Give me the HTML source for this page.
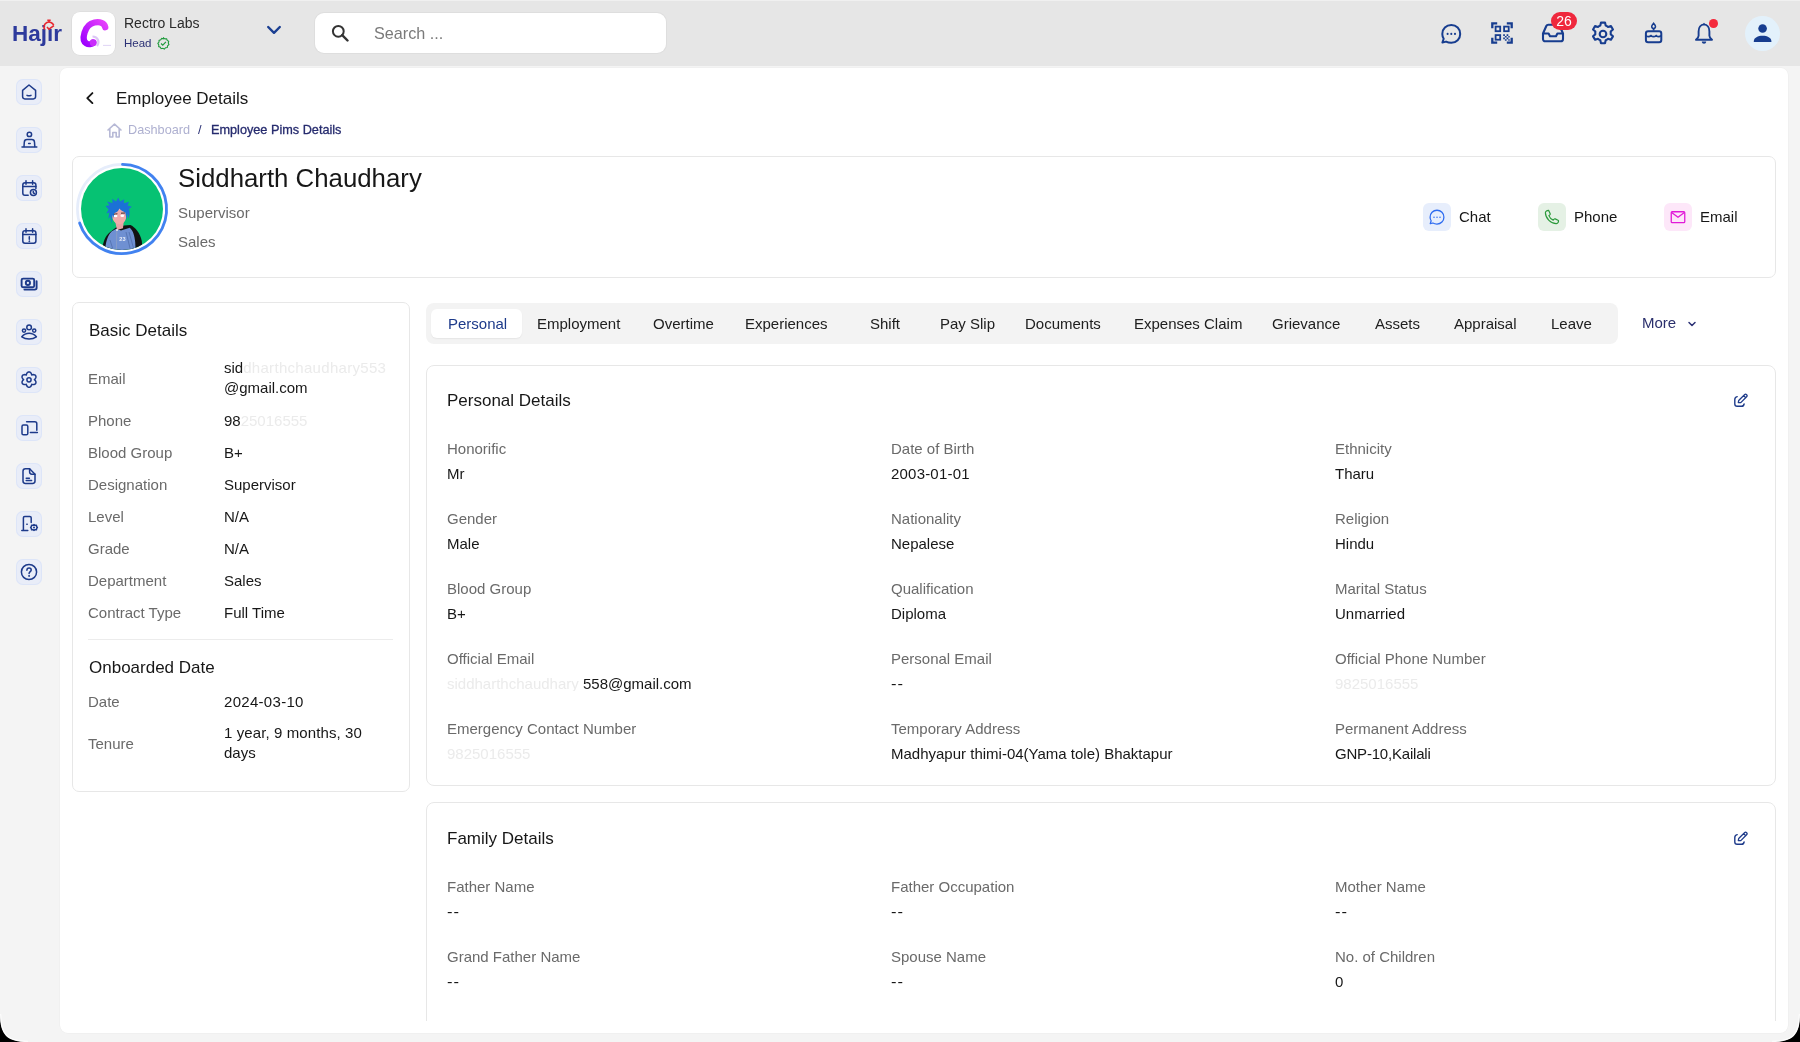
<!DOCTYPE html>
<html><head><meta charset="utf-8">
<style>
*{box-sizing:border-box;margin:0;padding:0}
html,body{width:1800px;height:1042px;overflow:hidden;background:#000;font-family:"Liberation Sans",sans-serif;color:#1f1f1f}
#win{position:absolute;left:0;top:0;width:1800px;height:1042px;background:#f4f4f4;border-radius:0;overflow:hidden}
.abs{position:absolute;white-space:nowrap;will-change:transform}
.t{position:absolute;white-space:nowrap;will-change:transform}
#hdr{position:absolute;left:0;top:1px;width:1800px;height:65px;background:#e6e6e6}
#topline{position:absolute;left:0;top:0;width:1800px;height:1px;background:#f0f0f0}
#main{position:absolute;left:60px;top:68px;width:1728px;height:965px;background:#fff;border-radius:7px 7px 8px 8px;box-shadow:0 0 0 0.5px #ececec;overflow:hidden}
#clip{position:absolute;left:0;top:0;width:1800px;height:1021px;overflow:hidden}
.ico{position:absolute}
.sb{position:absolute;left:16px;width:26px;height:26px;border-radius:7px;background:#e9edf8;box-shadow:inset 0 0 0 1px #dde5f8}
</style></head>
<body>
<div id="win">
  <div id="topline"></div>
  <div id="hdr"></div>
  <div id="main"></div>
  <!-- SIDEBAR -->
  <div class="sb" style="top:79px"></div><svg class="ico" style="left:17px;top:80px" width="24" height="24" viewBox="0 0 24 24"><path d="M5.6 10.4 L12 5 L18.6 10.4 V16.6 C18.6 18 17.7 18.9 16.3 18.9 H7.9 C6.5 18.9 5.6 18 5.6 16.6 Z" fill="none" stroke="#1d3a8a" stroke-width="1.5" stroke-linecap="round" stroke-linejoin="round"/><path d="M10 15.3 C11.3 16 12.7 16 14 15.3" fill="none" stroke="#1d3a8a" stroke-width="1.5" stroke-linecap="round" stroke-linejoin="round"/></svg>
  <div class="sb" style="top:127px"></div><svg class="ico" style="left:17px;top:128px" width="24" height="24" viewBox="0 0 24 24"><circle cx="12.4" cy="6.4" r="2.2" fill="none" stroke="#1d3a8a" stroke-width="1.5" stroke-linecap="round" stroke-linejoin="round"/><path d="M7 18.6 L7.3 14.2 C7.4 12.6 8.4 11.6 10 11.6 H14.8 C16.4 11.6 17.4 12.6 17.5 14.2 L17.8 18.6" fill="none" stroke="#1d3a8a" stroke-width="1.5" stroke-linecap="round" stroke-linejoin="round"/><path d="M5 19 H19.8" fill="none" stroke="#1d3a8a" stroke-width="1.5" stroke-linecap="round" stroke-linejoin="round"/><path d="M11.6 15.4 H13.2" fill="none" stroke="#1d3a8a" stroke-width="1.5" stroke-linecap="round" stroke-linejoin="round"/></svg>
  <div class="sb" style="top:175px"></div><svg class="ico" style="left:17px;top:176px" width="24" height="24" viewBox="0 0 24 24"><path d="M11.2 19.2 H7.9 C6.4 19.2 5.8 18.4 5.8 16.9 V9 C5.8 7.5 6.6 6.7 8.1 6.7 H16.7 C18.2 6.7 18.9 7.5 18.9 9 V12.4" fill="none" stroke="#1d3a8a" stroke-width="1.5" stroke-linecap="round" stroke-linejoin="round"/><path d="M9 4.8 V8.2 M15.6 4.8 V8.2 M5.8 10.6 H18.9" fill="none" stroke="#1d3a8a" stroke-width="1.5" stroke-linecap="round" stroke-linejoin="round"/><circle cx="16.4" cy="16.6" r="3" fill="none" stroke="#1d3a8a" stroke-width="1.5" stroke-linecap="round" stroke-linejoin="round"/><path d="M16.3 15.2 V16.8 L17.4 17.5" fill="none" stroke="#1d3a8a" stroke-width="1.5" stroke-linecap="round" stroke-linejoin="round"/></svg>
  <div class="sb" style="top:223px"></div><svg class="ico" style="left:17px;top:224px" width="24" height="24" viewBox="0 0 24 24"><rect x="5.8" y="6.7" width="13.1" height="12.5" rx="2.2" fill="none" stroke="#1d3a8a" stroke-width="1.5" stroke-linecap="round" stroke-linejoin="round"/><path d="M9 4.8 V8.2 M15.6 4.8 V8.2 M5.8 10.6 H18.9 M12.3 12.8 V15.2" fill="none" stroke="#1d3a8a" stroke-width="1.5" stroke-linecap="round" stroke-linejoin="round"/><circle cx="12.3" cy="17.2" r="0.5" fill="#1d3a8a" stroke="#1d3a8a"/></svg>
  <div class="sb" style="top:271px"></div><svg class="ico" style="left:17px;top:272px" width="24" height="24" viewBox="0 0 24 24"><rect x="4.6" y="6.6" width="12.6" height="8.6" rx="1.5" fill="none" stroke="#1d3a8a" stroke-width="1.9"/><circle cx="10.9" cy="10.9" r="2.1" fill="none" stroke="#1d3a8a" stroke-width="1.9"/><path d="M19.6 9.2 V15.8 C19.6 16.9 18.9 17.6 17.8 17.6 H7.4" fill="none" stroke="#1d3a8a" stroke-width="1.9" stroke-linecap="round"/></svg>
  <div class="sb" style="top:319px"></div><svg class="ico" style="left:17px;top:320px" width="24" height="24" viewBox="0 0 24 24"><circle cx="12.1" cy="7.4" r="2.3" fill="none" stroke="#1d3a8a" stroke-width="1.5" stroke-linecap="round" stroke-linejoin="round"/><circle cx="7" cy="10.6" r="1.6" fill="none" stroke="#1d3a8a" stroke-width="1.5" stroke-linecap="round" stroke-linejoin="round"/><circle cx="17.2" cy="10.6" r="1.6" fill="none" stroke="#1d3a8a" stroke-width="1.5" stroke-linecap="round" stroke-linejoin="round"/><path d="M4.8 16.8 C7 14.3 9.4 13.3 12.1 13.3 C14.8 13.3 17.2 14.3 19.4 16.8 C17.2 18.4 14.8 19 12.1 19 C9.4 19 7 18.4 4.8 16.8 Z" fill="none" stroke="#1d3a8a" stroke-width="1.5" stroke-linecap="round" stroke-linejoin="round"/></svg>
  <div class="sb" style="top:367px"></div><svg class="ico" style="left:17px;top:368px" width="24" height="24" viewBox="0 0 24 24"><path d="M12.00 19.30 L11.34 19.19 L10.72 18.88 L10.18 18.39 L9.76 17.75 L9.47 17.03 L9.30 16.28 L8.56 16.51 L7.79 16.62 L7.03 16.57 L6.34 16.35 L5.76 15.97 L5.33 15.45 L5.09 14.82 L5.05 14.13 L5.21 13.42 L5.55 12.74 L6.03 12.12 L6.60 11.60 L6.03 11.08 L5.55 10.46 L5.21 9.78 L5.05 9.07 L5.09 8.38 L5.33 7.75 L5.76 7.23 L6.34 6.85 L7.03 6.63 L7.79 6.58 L8.56 6.69 L9.30 6.92 L9.47 6.17 L9.76 5.45 L10.18 4.81 L10.72 4.32 L11.34 4.01 L12.00 3.90 L12.66 4.01 L13.28 4.32 L13.82 4.81 L14.24 5.45 L14.53 6.17 L14.70 6.92 L15.44 6.69 L16.21 6.58 L16.97 6.63 L17.66 6.85 L18.24 7.23 L18.67 7.75 L18.91 8.38 L18.95 9.07 L18.79 9.78 L18.45 10.46 L17.97 11.08 L17.40 11.60 L17.97 12.12 L18.45 12.74 L18.79 13.42 L18.95 14.13 L18.91 14.82 L18.67 15.45 L18.24 15.97 L17.66 16.35 L16.97 16.57 L16.21 16.62 L15.44 16.51 L14.70 16.28 L14.53 17.03 L14.24 17.75 L13.82 18.39 L13.28 18.88 L12.66 19.19 L12.00 19.30Z" fill="none" stroke="#1d3a8a" stroke-width="1.5" stroke-linecap="round" stroke-linejoin="round"/><circle cx="12" cy="11.8" r="2.1" fill="none" stroke="#1d3a8a" stroke-width="1.5" stroke-linecap="round" stroke-linejoin="round"/></svg>
  <div class="sb" style="top:415px"></div><svg class="ico" style="left:17px;top:416px" width="24" height="24" viewBox="0 0 24 24"><path d="M9.6 5.8 H17.8 C19 5.8 19.8 6.6 19.8 7.8 V14.2" fill="none" stroke="#1d3a8a" stroke-width="1.5" stroke-linecap="round" stroke-linejoin="round"/><rect x="5" y="9" width="5.8" height="9.8" rx="1.4" fill="none" stroke="#1d3a8a" stroke-width="1.5" stroke-linecap="round" stroke-linejoin="round"/><path d="M13.4 16.6 H20.4" fill="none" stroke="#1d3a8a" stroke-width="1.5" stroke-linecap="round" stroke-linejoin="round"/></svg>
  <div class="sb" style="top:463px"></div><svg class="ico" style="left:17px;top:464px" width="24" height="24" viewBox="0 0 24 24"><path d="M12.6 4.8 H8.4 C7 4.8 6 5.8 6 7.2 V17 C6 18.4 7 19.4 8.4 19.4 H15.6 C17 19.4 18 18.4 18 17 V10.2 Z" fill="none" stroke="#1d3a8a" stroke-width="1.5" stroke-linecap="round" stroke-linejoin="round"/><path d="M12.6 4.8 V7.8 C12.6 9.2 13.4 10.2 14.8 10.2 H18" fill="none" stroke="#1d3a8a" stroke-width="1.5" stroke-linecap="round" stroke-linejoin="round"/><path d="M9.2 14.2 H12.4 M9.2 16.6 H14.6" fill="none" stroke="#1d3a8a" stroke-width="1.5" stroke-linecap="round" stroke-linejoin="round"/></svg>
  <div class="sb" style="top:511px"></div><svg class="ico" style="left:17px;top:512px" width="24" height="24" viewBox="0 0 24 24"><path d="M4.8 18.6 H10.8 M6.4 18.6 V5.8 C6.4 5 7 4.4 7.8 4.4 H12.8 C13.6 4.4 14.2 5 14.2 5.8 V9.6 M14.2 7.2 V10.4" fill="none" stroke="#1d3a8a" stroke-width="1.5" stroke-linecap="round" stroke-linejoin="round"/><circle cx="10" cy="12.2" r="0.45" fill="#1d3a8a" stroke="#1d3a8a"/><path d="M17 12.6 L18.1 13.3 L19.4 13.2 L19.6 14.5 L20.4 15.5 L19.6 16.5 L19.4 17.8 L18.1 17.7 L17 18.4 L15.9 17.7 L14.6 17.8 L14.4 16.5 L13.6 15.5 L14.4 14.5 L14.6 13.2 L15.9 13.3 Z" fill="none" stroke="#1d3a8a" stroke-width="1.5" stroke-linecap="round" stroke-linejoin="round"/><circle cx="17" cy="15.5" r="1" fill="#1d3a8a"/></svg>
  <div class="sb" style="top:559px"></div><svg class="ico" style="left:17px;top:560px" width="24" height="24" viewBox="0 0 24 24"><circle cx="12" cy="12" r="7.6" fill="none" stroke="#1d3a8a" stroke-width="1.5" stroke-linecap="round" stroke-linejoin="round"/><path d="M9.9 10.2 C9.9 8.8 10.8 8 12.1 8 C13.3 8 14.2 8.8 14.2 9.9 C14.2 11.5 12.1 11.7 12.1 13.4" fill="none" stroke="#1d3a8a" stroke-width="1.5" stroke-linecap="round" stroke-linejoin="round"/><circle cx="12.1" cy="15.9" r="0.55" fill="#1d3a8a" stroke="#1d3a8a"/></svg>

  <!-- HEADER -->
  <!-- RIGHT ICONS -->
  <svg class="ico" style="left:1440px;top:22.5px" width="22" height="21" viewBox="0 0 22 21"><path d="M6 18.6 C8 19.6 9.5 19.8 11.3 19.8 C16.4 19.8 20.2 15.9 20.2 10.9 C20.2 5.9 16.4 2 11.3 2 C6.2 2 2.3 5.9 2.3 10.9 C2.3 12.8 2.8 14.3 3.7 15.7 L2.4 19.6 Z" fill="none" stroke="#173d8f" stroke-width="2" stroke-linejoin="round"/><circle cx="7.6" cy="10.9" r="1.05" fill="#173d8f"/><circle cx="11.3" cy="10.9" r="1.05" fill="#173d8f"/><circle cx="15" cy="10.9" r="1.05" fill="#173d8f"/></svg>
  <svg class="ico" style="left:1490px;top:21px" width="24" height="24" viewBox="0 0 24 24"><path d="M2.3 7.2 V2.3 H7.2 M16.8 2.3 H21.7 V7.2 M2.3 16.8 V21.7 H7.2 M16.8 21.7 H21.7 V16.8" fill="none" stroke="#173d8f" stroke-width="2.3"/><rect x="5.6" y="5.6" width="4.6" height="4.6" fill="none" stroke="#173d8f" stroke-width="1.8"/><rect x="14.1" y="5.6" width="4.6" height="4.6" fill="none" stroke="#173d8f" stroke-width="1.8"/><rect x="5.6" y="14.1" width="4.6" height="4.6" fill="none" stroke="#173d8f" stroke-width="1.8"/><path d="M13.2 13.2 h1.7 v1.7 h-1.7z M16.6 13.2 h1.7 v1.7 h-1.7z M14.9 14.9 h1.7 v1.7 h-1.7z M18.3 14.9 h1.4 v1.7 h-1.4z M13.2 16.6 h1.7 v1.7 h-1.7z M16.6 16.6 h1.7 v1.7 h-1.7z M14.9 18.3 h1.7 v1.5 h-1.7z M18.3 18.3 h1.4 v1.5 h-1.4z" fill="#173d8f"/></svg>
  <svg class="ico" style="left:1541px;top:23px" width="24" height="20" viewBox="0 0 24 20"><path d="M2 10.5 L5.3 3 C5.7 2.2 6.4 1.8 7.3 1.8 H16.7 C17.6 1.8 18.3 2.2 18.7 3 L22 10.5 V16 C22 17.3 21 18.3 19.7 18.3 H4.3 C3 18.3 2 17.3 2 16 Z M2 10.5 H7.6 L9 13.2 H15 L16.4 10.5 H22" fill="none" stroke="#173d8f" stroke-width="2.1" stroke-linejoin="round"/></svg>
  <div class="abs" style="left:1551px;top:12px;width:26px;height:18px;border-radius:9px;background:#ef283d;color:#fff;font-size:14px;line-height:18px;text-align:center">26</div>
  <svg class="ico" style="left:1589px;top:20px" width="28" height="28" viewBox="0 0 28 28"><path d="M12 2.6 h4 l0.7 3 a8.8 8.8 0 0 1 2.3 1.35 l2.95 -0.95 2 3.45 -2.3 2.1 a8.8 8.8 0 0 1 0 2.7 l2.3 2.1 -2 3.45 -2.95 -0.95 a8.8 8.8 0 0 1 -2.3 1.35 l-0.7 3 h-4 l-0.7 -3 a8.8 8.8 0 0 1 -2.3 -1.35 l-2.95 0.95 -2 -3.45 2.3 -2.1 a8.8 8.8 0 0 1 0 -2.7 l-2.3 -2.1 2 -3.45 2.95 0.95 a8.8 8.8 0 0 1 2.3 -1.35z" fill="none" stroke="#173d8f" stroke-width="2.1" stroke-linejoin="round"/><circle cx="14" cy="14" r="3.3" fill="none" stroke="#173d8f" stroke-width="2.1"/></svg>
  <svg class="ico" style="left:1643px;top:22px" width="21" height="22" viewBox="0 0 21 22"><path d="M10.6 1.2 C11.9 2.6 12.5 3.6 12.5 4.6 C12.5 5.7 11.7 6.4 10.6 6.4 C9.5 6.4 8.7 5.7 8.7 4.6 C8.7 3.6 9.3 2.6 10.6 1.2Z" fill="none" stroke="#173d8f" stroke-width="1.5"/><path d="M10.6 6.6 V8.6" stroke="#173d8f" stroke-width="1.8"/><rect x="2.9" y="9.2" width="15.4" height="11" rx="2.2" fill="none" stroke="#173d8f" stroke-width="2"/><path d="M3 13.6 C4.8 15.1 6.3 15.1 8 13.6 C9.7 15.1 11.4 15.1 13.2 13.6 C15 15.1 16.5 15.1 18.2 13.6" fill="none" stroke="#173d8f" stroke-width="1.7"/></svg>
  <svg class="ico" style="left:1694px;top:22px" width="20" height="23" viewBox="0 0 20 23"><path d="M10 2.4 C6.6 2.6 4.6 5.6 4.6 9.4 V13.8 C4.6 15.2 3.6 16.4 2 17.8 H18 C16.4 16.4 15.4 15.2 15.4 13.8 V9.4 C15.4 5.6 13.4 2.6 10 2.4Z" fill="none" stroke="#173d8f" stroke-width="1.9" stroke-linejoin="round"/><path d="M10 0.8 L11.2 2.6 H8.8Z" fill="#173d8f"/><path d="M7.8 19.6 H12.2 C12.2 21 11.2 21.8 10 21.8 C8.8 21.8 7.8 21 7.8 19.6Z" fill="#173d8f"/></svg>
  <div class="abs" style="left:1709.4px;top:19px;width:8.8px;height:8.8px;border-radius:50%;background:#f42a3c"></div>
  <div class="abs" style="left:1745px;top:15.5px;width:35px;height:35px;border-radius:50%;background:#e3f1fb"></div>
  <svg class="ico" style="left:1752px;top:23px" width="21" height="20" viewBox="0 0 21 20"><circle cx="10.6" cy="5.5" r="4.3" fill="#173d8f"/><path d="M1.8 19 V18.2 C1.8 14.8 6 12.8 10.6 12.8 C15.2 12.8 19.4 14.8 19.4 18.2 V19 Z" fill="#173d8f"/></svg>

  <div class="abs" style="left:12px;top:20.8px;font-size:22.5px;font-weight:bold;color:#2d3a9c;letter-spacing:0px;line-height:25px">Hajir</div>
  <svg class="ico" style="left:41px;top:18px" width="16" height="14" viewBox="0 0 16 14"><circle cx="8" cy="7.4" r="3.8" fill="#e6e6e6"/><path d="M3.67 11.5 A5 5 0 1 1 12.7 7.29" fill="none" stroke="#e8262f" stroke-width="1.6"/><path d="M6.3 2.3 H9.7 M8 2.3 V4" stroke="#e8262f" stroke-width="1.5"/><path d="M6 9 L8 11.2 L12.9 7.6" fill="none" stroke="#e8262f" stroke-width="1.6" stroke-linejoin="round"/></svg>
  <div class="abs" style="left:72px;top:12px;width:43px;height:43px;background:#fff;border-radius:8px;box-shadow:0 0 0 0.6px #d8d8d8"></div>
  <svg class="ico" style="left:72px;top:12px" width="43" height="43" viewBox="0 0 43 43">
    <defs><linearGradient id="cg" x1="0" y1="1" x2="1" y2="0"><stop offset="0" stop-color="#9d00ff"/><stop offset="1" stop-color="#e640fb"/></linearGradient></defs>
    <g transform="translate(22 21.5) scale(0.9 0.9) translate(-22 -21)"><path d="M34.5 14 C33.5 9.5 28.5 7.6 22.5 8.8 C16.5 10 13 15 11.5 20 C10 25 10.2 30 13.5 32 C16 33.5 19.5 33 21 31" fill="none" stroke="url(#cg)" stroke-width="7" stroke-linecap="round"/>
    <circle cx="21.2" cy="31.2" r="3.8" fill="#c92cfb"/></g>
    <path d="M20.5 24.5 C26 24.5 28 30 25 34" fill="none" stroke="#dcc6f5" stroke-width="2.2"/>
    <circle cx="32" cy="33.2" r="0.55" fill="#b59ae6"/><circle cx="34" cy="33.2" r="0.55" fill="#b59ae6"/><circle cx="36" cy="33.2" r="0.55" fill="#b59ae6"/><circle cx="38" cy="33.2" r="0.55" fill="#b59ae6"/>
  </svg>
  <div class="abs" style="left:124px;top:14.5px;font-size:14px;color:#2a2a2a;line-height:16px">Rectro Labs</div>
  <div class="abs" style="left:124px;top:36px;font-size:11.5px;color:#2b3175;line-height:14px">Head</div>
  <svg class="ico" style="left:157px;top:37px" width="13" height="13" viewBox="0 0 24 24"><path d="M12 1.5 L14.6 3.4 L17.8 3.2 L18.9 6.2 L21.6 8 L20.8 11.1 L22 14.1 L19.5 16.1 L19 19.3 L15.8 19.8 L13.6 22.2 L10.7 20.9 L7.6 21.6 L6.1 18.8 L3.1 17.7 L3.3 14.5 L1.6 11.8 L3.7 9.4 L3.8 6.2 L6.9 5.3 L8.7 2.6 L11.8 3.2Z" fill="none" stroke="#1f9a3c" stroke-width="2"/><path d="M7.5 12 L10.6 15 L16.5 9" fill="none" stroke="#1f9a3c" stroke-width="2.2"/></svg>
  <svg class="ico" style="left:266px;top:24px" width="16" height="12" viewBox="0 0 16 12"><path d="M2.2 3 L8 8.8 L13.8 3" fill="none" stroke="#1b3f92" stroke-width="2.4" stroke-linecap="round" stroke-linejoin="round"/></svg>
  <div class="abs" style="left:315px;top:13px;width:351px;height:40px;background:#fff;border-radius:9px;box-shadow:0 0 0 1px #dedede"></div>
  <svg class="ico" style="left:331px;top:24px" width="19" height="18" viewBox="0 0 19 18"><circle cx="7.3" cy="7.3" r="5.4" fill="none" stroke="#333" stroke-width="2"/><path d="M11.2 11.2 L16.5 16.5" stroke="#333" stroke-width="2.4" stroke-linecap="round"/></svg>
  <div class="abs" style="left:374px;top:23px;font-size:16.2px;color:#7a7a7a;line-height:20px">Search ...</div>


  <div id="clip">
<svg class="ico" style="left:83px;top:90px" width="14" height="16" viewBox="0 0 14 16"><path d="M9.4 3.1 L4.3 8.1 L9.4 13.1" fill="none" stroke="#171717" stroke-width="1.9" stroke-linecap="round" stroke-linejoin="round"/></svg>
<div class="t" style="left:116.00px;top:89.61px;font-size:17px;line-height:17px;color:#171717;">Employee Details</div>
<svg class="ico" style="left:105.5px;top:122px" width="17" height="17" viewBox="0 0 17 17"><path d="M2 8 L8.5 2.2 L15 8 M3.8 6.6 V15 H6.8 V10.5 H10.2 V15 H13.2 V6.6" fill="none" stroke="#b7b9d6" stroke-width="1.6" stroke-linejoin="round" stroke-linecap="round"/></svg>
<div class="t" style="left:127.50px;top:123.65px;font-size:12.7px;line-height:12.7px;color:#aeb0d0;">Dashboard</div>
<div class="t" style="left:198.00px;top:123.65px;font-size:12.7px;line-height:12.7px;color:#2b3175;">/</div>
<div class="t" style="left:210.50px;top:123.65px;font-size:12.7px;line-height:12.7px;color:#262b6e;-webkit-text-stroke:0.3px #262b6e;">Employee Pims Details</div>
<div class="abs" style="left:72px;top:156px;width:1704px;height:122px;border:1px solid #e7e7e7;border-radius:7px;background:#fff"></div>
<svg class="ico" style="left:74px;top:162px" width="96" height="96" viewBox="0 0 96 96">
<defs><clipPath id="av"><circle cx="48" cy="47" r="41"/></clipPath></defs>
<circle cx="48" cy="47" r="44.6" fill="none" stroke="#e6edfb" stroke-width="2.6"/>
<path d="M48.5 2.4 A44.6 44.6 0 1 1 5.6 61" fill="none" stroke="#4182f0" stroke-width="2.8" stroke-linecap="round"/>
<circle cx="48" cy="47" r="41" fill="#06c273"/>
<g clip-path="url(#av)">
<path d="M27.5 92 C28.5 82 30.5 75 35 71 L42 65.5 L50 63.5 L56.5 63 C61.5 65.5 66 71 67.8 79 L69 92 Z" fill="#121212"/>
<path d="M31 92 C31.2 83 32.5 75 37.5 69.5 L42.2 66.8 L47 68.6 L55.8 65.8 C59 68.5 60.6 74 61.2 80 L61.8 92 Z" fill="#6f90d2"/>
<path d="M42.8 68 L42.3 92" stroke="#9aa6bd" stroke-width="0.6"/>
<path d="M36 78 L38.5 86 M52 70 L57 90 M55 70 L59.5 86" stroke="#4e6aa6" stroke-width="0.7"/>
<path d="M41.2 59.5 L49.8 58.8 L49 66.2 L43 68 Z" fill="#e9a3a6"/>
<circle cx="43" cy="68" r="1" fill="#eee"/>
<text x="45.3" y="79.2" font-size="5.6" fill="#e9eef8" font-family="Liberation Sans" font-weight="bold">23</text>
<path d="M38 53.5 C37.6 48 40.8 45.5 45 45.4 C49.4 45.3 52.6 48 52.4 53.8 C52.2 58.6 49.6 62 45.6 62.2 C41.6 62.4 38.3 58.6 38 53.5 Z" fill="#f0aaaa"/>
<path d="M31.5 44 L35.5 43.2 L33 39.5 L38.5 41 L38.2 36.8 L42 39.5 L44.3 35.5 L46 39.6 L50.2 37.3 L49.8 41.2 L55 39.8 L53.6 43.5 L57.8 44.8 L55 47 C56 50 55.8 53 54.5 56.8 L53.3 51.5 L52.6 58 L51.3 50.6 C49.5 49.5 47 48.8 45.4 46.6 C44.4 49.5 42.4 50.6 40.2 51.2 L39.8 56 L38.6 53 L37.4 61.8 L36.4 54.5 L34.2 57 L35.4 50.5 L32.4 51.4 L34.6 47.6 Z" fill="#1b71d6"/>
<path d="M39.8 52.2 L43.4 51.8 M47 51.2 L51 51" stroke="#111" stroke-width="0.8"/>
<ellipse cx="41.6" cy="54" rx="1.9" ry="1.25" fill="#fff"/><ellipse cx="48.3" cy="53.7" rx="1.9" ry="1.25" fill="#fff"/>
</g></svg>
<div class="t" style="left:178.00px;top:166.26px;font-size:25.8px;line-height:25.8px;color:#171717;">Siddharth Chaudhary</div>
<div class="t" style="left:178.00px;top:204.70px;font-size:15px;line-height:15px;color:#6a6a6a;">Supervisor</div>
<div class="t" style="left:178.00px;top:234.30px;font-size:15px;line-height:15px;color:#6a6a6a;">Sales</div>
<div class="abs" style="left:1423px;top:203px;width:28px;height:28px;background:#e7eefc;border-radius:6px"></div>
<svg class="ico" style="left:1428px;top:208px" width="18" height="18" viewBox="0 0 24 24"><path d="M6.5 20 C8.2 21 10 21.4 12 21.4 C17.3 21.4 21.2 17.4 21.2 12.2 C21.2 7 17.3 3 12 3 C6.7 3 2.8 7 2.8 12.2 C2.8 14 3.3 15.6 4.2 17 L3 21 Z" fill="none" stroke="#2e6cf0" stroke-width="1.7" stroke-linejoin="round"/><circle cx="8" cy="12.2" r="1" fill="#2e6cf0"/><circle cx="12" cy="12.2" r="1" fill="#2e6cf0"/><circle cx="16" cy="12.2" r="1" fill="#2e6cf0"/></svg>
<div class="t" style="left:1459.00px;top:208.50px;font-size:15px;line-height:15px;color:#171717;">Chat</div>
<div class="abs" style="left:1538px;top:203px;width:28px;height:28px;background:#e5f1e5;border-radius:6px"></div>
<svg class="ico" style="left:1543px;top:208px" width="18" height="18" viewBox="0 0 24 24"><path d="M7.6 3.2 L9.6 7.6 C9.8 8.2 9.6 8.8 9.1 9.2 L7.8 10.2 C8.8 12.8 11 15 13.6 16.2 L14.7 14.9 C15.1 14.4 15.8 14.3 16.3 14.5 L20.6 16.6 C21 18.4 20 20.6 17.8 20.8 C10.6 21 3.4 13.8 3.2 6.4 C3.3 4.2 5.4 3 7.6 3.2 Z" fill="none" stroke="#2b9a3b" stroke-width="1.6" stroke-linejoin="round"/></svg>
<div class="t" style="left:1574.00px;top:208.50px;font-size:15px;line-height:15px;color:#171717;">Phone</div>
<div class="abs" style="left:1664px;top:203px;width:28px;height:28px;background:#fde7f9;border-radius:6px"></div>
<svg class="ico" style="left:1669px;top:208px" width="18" height="18" viewBox="0 0 24 24"><rect x="3" y="5" width="18" height="14.5" rx="1.2" fill="none" stroke="#e11ad8" stroke-width="1.7"/><path d="M3.5 6 L12 12.4 L20.5 6" fill="none" stroke="#e11ad8" stroke-width="1.7" stroke-linejoin="round"/></svg>
<div class="t" style="left:1700.00px;top:208.50px;font-size:15px;line-height:15px;color:#171717;">Email</div>
<div class="abs" style="left:72px;top:302px;width:338px;height:490px;border:1px solid #e7e7e7;border-radius:7px;background:#fff"></div>
<div class="t" style="left:88.50px;top:322.01px;font-size:17px;line-height:17px;color:#171717;">Basic Details</div>
<div class="t" style="left:88.00px;top:370.50px;font-size:15px;line-height:15px;color:#6a6a6a;">Email</div>
<div class="t" style="left:88.00px;top:412.60px;font-size:15px;line-height:15px;color:#6a6a6a;">Phone</div>
<div class="t" style="left:88.00px;top:444.60px;font-size:15px;line-height:15px;color:#6a6a6a;">Blood Group</div>
<div class="t" style="left:224.00px;top:444.60px;font-size:15px;line-height:15px;color:#171717;">B+</div>
<div class="t" style="left:88.00px;top:476.50px;font-size:15px;line-height:15px;color:#6a6a6a;">Designation</div>
<div class="t" style="left:224.00px;top:476.50px;font-size:15px;line-height:15px;color:#171717;">Supervisor</div>
<div class="t" style="left:88.00px;top:508.50px;font-size:15px;line-height:15px;color:#6a6a6a;">Level</div>
<div class="t" style="left:224.00px;top:508.50px;font-size:15px;line-height:15px;color:#171717;">N/A</div>
<div class="t" style="left:88.00px;top:540.50px;font-size:15px;line-height:15px;color:#6a6a6a;">Grade</div>
<div class="t" style="left:224.00px;top:540.50px;font-size:15px;line-height:15px;color:#171717;">N/A</div>
<div class="t" style="left:88.00px;top:572.60px;font-size:15px;line-height:15px;color:#6a6a6a;">Department</div>
<div class="t" style="left:224.00px;top:572.60px;font-size:15px;line-height:15px;color:#171717;">Sales</div>
<div class="t" style="left:88.00px;top:604.60px;font-size:15px;line-height:15px;color:#6a6a6a;">Contract Type</div>
<div class="t" style="left:224.00px;top:604.60px;font-size:15px;line-height:15px;color:#171717;">Full Time</div>
<div class="t" style="left:224.00px;top:360.20px;font-size:15px;line-height:15px;color:#171717;">sid<span style="color:#ebebeb;filter:blur(0.7px);display:inline-block;letter-spacing:0.3px">dharthchaudhary553</span></div>
<div class="t" style="left:224.00px;top:380.20px;font-size:15px;line-height:15px;color:#171717;">@gmail.com</div>
<div class="t" style="left:224.00px;top:412.60px;font-size:15px;line-height:15px;color:#171717;">98<span style="color:#ebebeb;filter:blur(0.7px);display:inline-block;">25016555</span></div>
<div class="abs" style="left:88px;top:638.5px;width:305px;height:1px;background:#ececec"></div>
<div class="t" style="left:88.50px;top:659.11px;font-size:17px;line-height:17px;color:#171717;">Onboarded Date</div>
<div class="t" style="left:88.00px;top:694.10px;font-size:15px;line-height:15px;color:#6a6a6a;">Date</div>
<div class="t" style="left:224.00px;top:694.10px;font-size:15px;line-height:15px;color:#171717;letter-spacing:0.3px;">2024-03-10</div>
<div class="t" style="left:88.00px;top:736.10px;font-size:15px;line-height:15px;color:#6a6a6a;">Tenure</div>
<div class="t" style="left:224.00px;top:725.30px;font-size:15px;line-height:15px;color:#171717;letter-spacing:0.1px;">1 year, 9 months, 30</div>
<div class="t" style="left:224.00px;top:745.20px;font-size:15px;line-height:15px;color:#171717;">days</div>
<div class="abs" style="left:426px;top:303px;width:1192px;height:41px;background:#f3f3f3;border-radius:8px"></div>
<div class="abs" style="left:431px;top:309px;width:91px;height:29px;background:#fff;border-radius:6px;box-shadow:0 1px 1.5px rgba(0,0,0,0.06)"></div>
<div class="t" style="left:447.80px;top:315.80px;font-size:15px;line-height:15px;color:#1d3a8a;">Personal</div>
<div class="t" style="left:537.00px;top:315.80px;font-size:15px;line-height:15px;color:#202020;">Employment</div>
<div class="t" style="left:653.00px;top:315.80px;font-size:15px;line-height:15px;color:#202020;">Overtime</div>
<div class="t" style="left:745.00px;top:315.80px;font-size:15px;line-height:15px;color:#202020;">Experiences</div>
<div class="t" style="left:870.00px;top:315.80px;font-size:15px;line-height:15px;color:#202020;">Shift</div>
<div class="t" style="left:940.00px;top:315.80px;font-size:15px;line-height:15px;color:#202020;">Pay Slip</div>
<div class="t" style="left:1025.00px;top:315.80px;font-size:15px;line-height:15px;color:#202020;">Documents</div>
<div class="t" style="left:1133.50px;top:315.80px;font-size:15px;line-height:15px;color:#202020;">Expenses Claim</div>
<div class="t" style="left:1271.50px;top:315.80px;font-size:15px;line-height:15px;color:#202020;">Grievance</div>
<div class="t" style="left:1374.50px;top:315.80px;font-size:15px;line-height:15px;color:#202020;">Assets</div>
<div class="t" style="left:1453.50px;top:315.80px;font-size:15px;line-height:15px;color:#202020;">Appraisal</div>
<div class="t" style="left:1551.00px;top:315.80px;font-size:15px;line-height:15px;color:#202020;">Leave</div>
<div class="t" style="left:1641.50px;top:315.10px;font-size:15px;line-height:15px;color:#2a2f6c;">More</div>
<svg class="ico" style="left:1686.5px;top:320px" width="10" height="8" viewBox="0 0 10 8"><path d="M2 2.5 L5 5.5 L8 2.5" fill="none" stroke="#2b3175" stroke-width="1.5" stroke-linecap="round" stroke-linejoin="round"/></svg>
<div class="abs" style="left:426px;top:365px;width:1350px;height:421px;border:1px solid #e7e7e7;border-radius:8px;background:#fff"></div>
<div class="t" style="left:446.50px;top:391.61px;font-size:17px;line-height:17px;color:#171717;">Personal Details</div>
<svg class="ico" style="left:1732px;top:392px" width="16" height="16" viewBox="0 0 16 16"><path d="M5.2 4.6 C3.7 4.9 2.8 5.9 2.8 7.4 V12 C2.8 13.4 3.7 14.3 5.1 14.3 H9.5 C10.9 14.3 11.8 13.5 12.1 12" fill="none" stroke="#1d3a8a" stroke-width="1.4" stroke-linecap="round"/><path d="M6.3 10.6 L6.7 8.5 L12.5 2.7 C13.1 2.1 14 2.1 14.6 2.7 C15.2 3.3 15.2 4.2 14.6 4.8 L8.8 10.6 Z M11.6 3.6 L13.7 5.7" fill="none" stroke="#1d3a8a" stroke-width="1.3" stroke-linejoin="round"/></svg>
<div class="t" style="left:446.50px;top:441.20px;font-size:15px;line-height:15px;color:#6a6a6a;">Honorific</div>
<div class="t" style="left:446.50px;top:465.80px;font-size:15px;line-height:15px;color:#171717;">Mr</div>
<div class="t" style="left:890.50px;top:441.20px;font-size:15px;line-height:15px;color:#6a6a6a;">Date of Birth</div>
<div class="t" style="left:890.50px;top:465.80px;font-size:15px;line-height:15px;color:#171717;letter-spacing:0.2px;">2003-01-01</div>
<div class="t" style="left:1334.50px;top:441.20px;font-size:15px;line-height:15px;color:#6a6a6a;">Ethnicity</div>
<div class="t" style="left:1334.50px;top:465.80px;font-size:15px;line-height:15px;color:#171717;">Tharu</div>
<div class="t" style="left:446.50px;top:511.20px;font-size:15px;line-height:15px;color:#6a6a6a;">Gender</div>
<div class="t" style="left:446.50px;top:535.80px;font-size:15px;line-height:15px;color:#171717;">Male</div>
<div class="t" style="left:890.50px;top:511.20px;font-size:15px;line-height:15px;color:#6a6a6a;">Nationality</div>
<div class="t" style="left:890.50px;top:535.80px;font-size:15px;line-height:15px;color:#171717;">Nepalese</div>
<div class="t" style="left:1334.50px;top:511.20px;font-size:15px;line-height:15px;color:#6a6a6a;">Religion</div>
<div class="t" style="left:1334.50px;top:535.80px;font-size:15px;line-height:15px;color:#171717;">Hindu</div>
<div class="t" style="left:446.50px;top:581.20px;font-size:15px;line-height:15px;color:#6a6a6a;">Blood Group</div>
<div class="t" style="left:446.50px;top:605.80px;font-size:15px;line-height:15px;color:#171717;">B+</div>
<div class="t" style="left:890.50px;top:581.20px;font-size:15px;line-height:15px;color:#6a6a6a;">Qualification</div>
<div class="t" style="left:890.50px;top:605.80px;font-size:15px;line-height:15px;color:#171717;">Diploma</div>
<div class="t" style="left:1334.50px;top:581.20px;font-size:15px;line-height:15px;color:#6a6a6a;">Marital Status</div>
<div class="t" style="left:1334.50px;top:605.80px;font-size:15px;line-height:15px;color:#171717;">Unmarried</div>
<div class="t" style="left:446.50px;top:651.20px;font-size:15px;line-height:15px;color:#6a6a6a;">Official Email</div>
<div class="t" style="left:446.50px;top:675.80px;font-size:15px;line-height:15px;color:#171717;"><span style="color:#ebebeb;filter:blur(0.7px);display:inline-block;width:136px;overflow:hidden;vertical-align:bottom">siddharthchaudhary</span>558@gmail.com</div>
<div class="t" style="left:890.50px;top:651.20px;font-size:15px;line-height:15px;color:#6a6a6a;">Personal Email</div>
<div class="t" style="left:890.50px;top:675.80px;font-size:15px;line-height:15px;color:#171717;transform:scaleX(1.1);transform-origin:0 0;letter-spacing:1px;margin-left:0.6px;">--</div>
<div class="t" style="left:1334.50px;top:651.20px;font-size:15px;line-height:15px;color:#6a6a6a;">Official Phone Number</div>
<div class="t" style="left:1334.50px;top:675.80px;font-size:15px;line-height:15px;color:#171717;"><span style="color:#ebebeb;filter:blur(0.7px);display:inline-block;">9825016555</span></div>
<div class="t" style="left:446.50px;top:721.20px;font-size:15px;line-height:15px;color:#6a6a6a;">Emergency Contact Number</div>
<div class="t" style="left:446.50px;top:745.80px;font-size:15px;line-height:15px;color:#171717;"><span style="color:#ebebeb;filter:blur(0.7px);display:inline-block;">9825016555</span></div>
<div class="t" style="left:890.50px;top:721.20px;font-size:15px;line-height:15px;color:#6a6a6a;">Temporary Address</div>
<div class="t" style="left:890.50px;top:745.80px;font-size:15px;line-height:15px;color:#171717;">Madhyapur thimi-04(Yama tole) Bhaktapur</div>
<div class="t" style="left:1334.50px;top:721.20px;font-size:15px;line-height:15px;color:#6a6a6a;">Permanent Address</div>
<div class="t" style="left:1334.50px;top:745.80px;font-size:15px;line-height:15px;color:#171717;letter-spacing:-0.2px;">GNP-10,Kailali</div>
<div class="abs" style="left:426px;top:802px;width:1350px;height:260px;border:1px solid #e7e7e7;border-radius:8px;background:#fff"></div>
<div class="t" style="left:446.50px;top:829.81px;font-size:17px;line-height:17px;color:#171717;">Family Details</div>
<svg class="ico" style="left:1732px;top:830px" width="16" height="16" viewBox="0 0 16 16"><path d="M5.2 4.6 C3.7 4.9 2.8 5.9 2.8 7.4 V12 C2.8 13.4 3.7 14.3 5.1 14.3 H9.5 C10.9 14.3 11.8 13.5 12.1 12" fill="none" stroke="#1d3a8a" stroke-width="1.4" stroke-linecap="round"/><path d="M6.3 10.6 L6.7 8.5 L12.5 2.7 C13.1 2.1 14 2.1 14.6 2.7 C15.2 3.3 15.2 4.2 14.6 4.8 L8.8 10.6 Z M11.6 3.6 L13.7 5.7" fill="none" stroke="#1d3a8a" stroke-width="1.3" stroke-linejoin="round"/></svg>
<div class="t" style="left:446.50px;top:879.20px;font-size:15px;line-height:15px;color:#6a6a6a;">Father Name</div>
<div class="t" style="left:446.50px;top:903.80px;font-size:15px;line-height:15px;color:#171717;transform:scaleX(1.1);transform-origin:0 0;letter-spacing:1px;margin-left:0.6px;">--</div>
<div class="t" style="left:890.50px;top:879.20px;font-size:15px;line-height:15px;color:#6a6a6a;">Father Occupation</div>
<div class="t" style="left:890.50px;top:903.80px;font-size:15px;line-height:15px;color:#171717;transform:scaleX(1.1);transform-origin:0 0;letter-spacing:1px;margin-left:0.6px;">--</div>
<div class="t" style="left:1334.50px;top:879.20px;font-size:15px;line-height:15px;color:#6a6a6a;">Mother Name</div>
<div class="t" style="left:1334.50px;top:903.80px;font-size:15px;line-height:15px;color:#171717;transform:scaleX(1.1);transform-origin:0 0;letter-spacing:1px;margin-left:0.6px;">--</div>
<div class="t" style="left:446.50px;top:949.20px;font-size:15px;line-height:15px;color:#6a6a6a;">Grand Father Name</div>
<div class="t" style="left:446.50px;top:973.80px;font-size:15px;line-height:15px;color:#171717;transform:scaleX(1.1);transform-origin:0 0;letter-spacing:1px;margin-left:0.6px;">--</div>
<div class="t" style="left:890.50px;top:949.20px;font-size:15px;line-height:15px;color:#6a6a6a;">Spouse Name</div>
<div class="t" style="left:890.50px;top:973.80px;font-size:15px;line-height:15px;color:#171717;transform:scaleX(1.1);transform-origin:0 0;letter-spacing:1px;margin-left:0.6px;">--</div>
<div class="t" style="left:1334.50px;top:949.20px;font-size:15px;line-height:15px;color:#6a6a6a;">No. of Children</div>
<div class="t" style="left:1334.50px;top:973.80px;font-size:15px;line-height:15px;color:#171717;">0</div>
  </div>

  <svg class="ico" style="left:1772px;top:1014px" width="28" height="28" viewBox="0 0 28 28"><path d="M0 28 C21 28 28 21 28 0 L28 28 Z" fill="#000"/><path d="M0 27.3 C20.5 27.3 27.3 20.5 27.3 0" fill="none" stroke="#fff" stroke-width="1.1" opacity="0.9"/></svg>
  <svg class="ico" style="left:0px;top:1014px" width="28" height="28" viewBox="0 0 28 28"><path d="M28 28 C7 28 0 21 0 0 L0 28 Z" fill="#000"/><path d="M28 27.3 C7.5 27.3 0.7 20.5 0.7 0" fill="none" stroke="#fff" stroke-width="1.1" opacity="0.9"/></svg>
</div>
</body></html>
